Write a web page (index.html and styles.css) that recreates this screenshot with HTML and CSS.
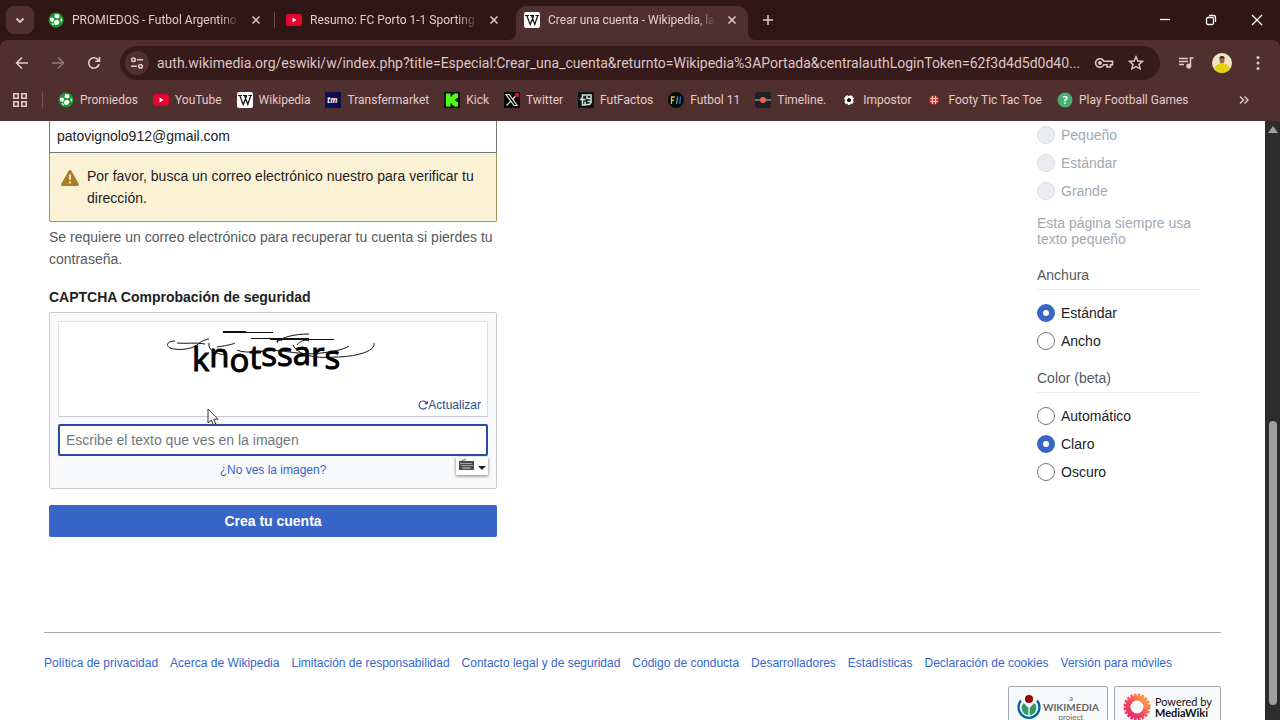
FILE: index.html
```html
<!DOCTYPE html>
<html lang="es">
<head>
    <meta charset="UTF-8">
    <title>Crear una cuenta - Wikipedia, la enciclopedia libre</title>
    <link rel="stylesheet" href="styles.css">
</head>
<body>
    <svg class="defs" width="0" height="0" aria-hidden="true">
        <symbol id="ball" viewBox="0 0 16 16">
            <circle cx="8" cy="8" r="7.5" fill="#18962c"/>
            <g fill="#fff">
                <path d="M7 2l4 .6.6 2.6-2.4 1.4L6.400 5.200z"/>
                <path d="M2 6l3-.6 1.400 2.400L4.600 10 2.200 9z"/>
                <path d="M6.800 8.400l3-.6 1.800 2.200-1.600 2.800-3 .2-1.400-2.400z"/>
                <path d="M12.800 6l1.600 1-.4 3-1.600-1.400z"/>
                <path d="M3.400 11l1.800.4 1 2.200-1.600-.6z"/>
            </g>
        </symbol>
        <symbol id="yt" viewBox="0 0 16 16">
            <rect y="2" width="16" height="12" rx="3" fill="#e8032f"/>
            <path d="M6.500 5.500v5l4-2.500z" fill="#fff"/>
        </symbol>
        <symbol id="wiki" viewBox="0 0 16 16">
            <rect width="16" height="16" rx="2" fill="#fff"/>
            <path d="M1 3.500h4M6 3.500h4M11.500 3.500H15M2.800 3.500l3.400 9 3.600-9M7.500 3.500l3.300 9 3-9" fill="none" stroke="#111" stroke-width="1.200"/>
        </symbol>
        <symbol id="x" viewBox="0 0 10 10">
            <path d="M1.500 1.500l7 7M8.500 1.500l-7 7" stroke="currentColor" stroke-width="1.500"/>
        </symbol>
    </svg>

    <header class="browser">
        <div class="tabstrip">
            <button class="tab-search" aria-label="Buscar pestañas"><svg width="12" height="12" viewBox="0 0 12 12"><path d="M2.500 4.500L6 8l3.500-3.500" fill="none" stroke="currentColor" stroke-width="1.800"/></svg></button>
            <div class="tab">
                <svg class="favicon"><use href="#ball"/></svg>
                <span class="tab-title">PROMIEDOS - Futbol Argentino</span>
                <button class="tab-close" aria-label="Cerrar"><svg width="10" height="10"><use href="#x"/></svg></button>
            </div>
            <div class="tab divided">
                <svg class="favicon"><use href="#yt"/></svg>
                <span class="tab-title">Resumo: FC Porto 1-1 Sporting</span>
                <button class="tab-close" aria-label="Cerrar"><svg width="10" height="10"><use href="#x"/></svg></button>
            </div>
            <div class="tab active">
                <svg class="favicon"><use href="#wiki"/></svg>
                <span class="tab-title">Crear una cuenta - Wikipedia, la</span>
                <button class="tab-close" aria-label="Cerrar"><svg width="10" height="10"><use href="#x"/></svg></button>
            </div>
            <button class="new-tab" aria-label="Nueva pestaña"><svg width="12" height="12" viewBox="0 0 12 12"><path d="M6 1v10M1 6h10" stroke="currentColor" stroke-width="1.500"/></svg></button>
            <div class="window-buttons">
                <button aria-label="Minimizar"><svg width="12" height="12" viewBox="0 0 12 12"><path d="M1 5.500h10" stroke="currentColor" stroke-width="1.300"/></svg></button>
                <button aria-label="Restaurar"><svg width="12" height="12" viewBox="0 0 12 12" fill="none" stroke="currentColor" stroke-width="1.300"><rect x="1.500" y="3.500" width="7" height="7" rx="1.500"/><path d="M4 1.500h4.500a2 2 0 0 1 2 2V8"/></svg></button>
                <button aria-label="Cerrar ventana"><svg width="12" height="12" viewBox="0 0 12 12"><path d="M1 1l10 10M11 1L1 11" stroke="currentColor" stroke-width="1.300"/></svg></button>
            </div>
        </div>

        <div class="toolbar">
            <button class="nav" aria-label="Atrás"><svg width="16" height="16" viewBox="0 0 16 16"><path d="M14 8H3M8 2.500L2.500 8 8 13.500" fill="none" stroke="currentColor" stroke-width="1.500"/></svg></button>
            <button class="nav off" aria-label="Adelante"><svg width="16" height="16" viewBox="0 0 16 16"><path d="M2 8h11M8 2.500L13.500 8 8 13.500" fill="none" stroke="currentColor" stroke-width="1.500"/></svg></button>
            <button class="nav" aria-label="Recargar"><svg width="16" height="16" viewBox="0 0 16 16"><path d="M13 9a5.200 5.200 0 1 1-1.300-4.600L13.500 6M13.500 2v4.200H9.300" fill="none" stroke="currentColor" stroke-width="1.600"/></svg></button>
            <div class="omnibox">
                <button class="site-info" aria-label="Información del sitio"><svg width="14" height="14" viewBox="0 0 14 14" fill="none" stroke="currentColor" stroke-width="1.500"><circle cx="3.500" cy="3.800" r="1.800"/><path d="M7 3.800h6M1 10.200h6"/><circle cx="10.500" cy="10.200" r="1.800"/></svg></button>
                <input class="url" type="text" aria-label="Dirección" value="auth.wikimedia.org/eswiki/w/index.php?title=Especial:Crear_una_cuenta&amp;returnto=Wikipedia%3APortada&amp;centralauthLoginToken=62f3d4d5d0d40...">
                <button class="nav" aria-label="Contraseñas"><svg width="20" height="16" viewBox="0 0 20 16" fill="none" stroke="currentColor" stroke-width="1.500"><path d="M9.800 6.300A4.300 4.300 0 1 0 9.800 9.700H13V12h3.500V9.700H18.500V6.300z"/><circle cx="6" cy="8" r="1.200" fill="currentColor"/></svg></button>
                <button class="nav" aria-label="Marcador"><svg width="16" height="16" viewBox="0 0 16 16"><path d="M8 1.800l1.900 4.200 4.600.4-3.500 3 1.100 4.500L8 11.500l-4.100 2.400L5 9.400l-3.500-3 4.600-.4z" fill="none" stroke="currentColor" stroke-width="1.400"/></svg></button>
            </div>
            <div class="toolbar-end">
                <button class="nav" aria-label="Controles multimedia"><svg width="16" height="16" viewBox="0 0 16 16" fill="none" stroke="currentColor" stroke-width="1.500"><path d="M1 3.500h9M1 6.500h9M1 9.500h5M12.500 11V3h3"/><circle cx="10.800" cy="11" r="1.800" fill="currentColor"/></svg></button>
                <button class="nav" aria-label="Perfil"><svg width="20" height="20" viewBox="0 0 20 20"><circle cx="10" cy="10" r="10" fill="#efe6c8"/><path d="M2 16c1-4 4-5.500 8-5.500s7 1.500 8 5.500a10 10 0 0 1-16 0z" fill="#dfd310"/><ellipse cx="10" cy="6.800" rx="2.600" ry="3.600" fill="#9b6a3d"/><path d="M7.400 5.500a2.600 2.600 0 0 1 5.200 0z" fill="#3d281d"/></svg></button>
                <button class="nav" aria-label="Menú"><svg width="16" height="16" viewBox="0 0 16 16" fill="currentColor"><circle cx="8" cy="2.500" r="1.500"/><circle cx="8" cy="8" r="1.500"/><circle cx="8" cy="13.500" r="1.500"/></svg></button>
            </div>
        </div>

        <nav class="bookmarks">
            <button class="apps" aria-label="Aplicaciones"><svg width="16" height="16" viewBox="0 0 16 16" fill="none" stroke="currentColor" stroke-width="1.600"><path d="M1.800 1.800h4.400v4.400H1.800zM9.800 1.800h4.400v4.400H9.800zM1.800 9.800h4.400v4.400H1.800zM9.800 9.800h4.400v4.400H9.800z"/></svg></button>
            <a href="#"><svg class="favicon"><use href="#ball"/></svg>Promiedos</a>
            <a href="#"><svg class="favicon"><use href="#yt"/></svg>YouTube</a>
            <a href="#"><svg class="favicon"><use href="#wiki"/></svg>Wikipedia</a>
            <a href="#"><svg class="favicon" viewBox="0 0 16 16"><rect width="16" height="16" fill="#0b1152"/><text x="2" y="11" class="tm">tm</text></svg>Transfermarket</a>
            <a href="#"><svg class="favicon" viewBox="0 0 16 16"><rect width="16" height="16" fill="#0a140a"/><path d="M2 1.500h4.500v3H8V3h1.500V1.500H14v4.500h-1.500v1.300H11v1.400h1.500V10H14v4.500H9.500V13H8v-1.500H6.500v3H2z" fill="#4ffb1a"/></svg>Kick</a>
            <a href="#"><svg class="favicon" viewBox="0 0 16 16"><rect width="16" height="16" fill="#050505"/><path d="M2 2.500h3.200l8 11H10zM13 2.500l-4.600 5M7 9l-4.500 4.500" fill="none" stroke="#e6e6e6" stroke-width="1.200"/><circle cx="13" cy="3" r="2.200" fill="#d8123c"/></svg>Twitter</a>
            <a href="#"><svg class="favicon" viewBox="0 0 16 16"><rect width="16" height="16" fill="#0d1512"/><path d="M8 3H4.500v2.500L3 7.500h4.500M4.500 7.500V13H7V9.500M7.500 12.500H11.500l1.500-2V3H9v3.500h4M9.500 9.500H13" fill="none" stroke="#d5e3dc" stroke-width="1.500"/></svg>FutFactos</a>
            <a href="#"><svg class="favicon" viewBox="0 0 16 16"><circle cx="8" cy="8" r="8" fill="#06090f"/><path d="M3.500 12V5h3.300M3.500 8.300h2.700" fill="none" stroke="#e0c52c" stroke-width="1.300"/><path d="M9.500 4.500l-.8 7.500" stroke="#28b8c4" stroke-width="1.300"/><path d="M12.500 4.500l-.8 7.500" stroke="#2a75d8" stroke-width="1.300"/></svg>Futbol 11</a>
            <a href="#"><svg class="favicon" viewBox="0 0 16 16"><rect width="16" height="16" rx="3" fill="#1c2127"/><path d="M0 8h16" stroke="#aaa" stroke-width="1.200"/><circle cx="8" cy="8" r="3" fill="#f4604c"/></svg>Timeline.</a>
            <a href="#"><svg class="favicon" viewBox="0 0 16 16"><circle cx="8" cy="8" r="5" fill="#fff"/><path d="M8 5.800l2.200 1.600-.8 2.600H6.600l-.8-2.600zM6.500 3h3l-1.500 1zM3 7l1.300 1-.8 2zM13 7l-1.300 1 .8 2zM5.500 12.500l.3-1.300 1.400 1.500zM10.500 12.500l-.3-1.300-1.400 1.500z" fill="#15100f"/></svg>Impostor</a>
            <a href="#"><svg class="favicon" viewBox="0 0 16 16"><circle cx="8" cy="8" r="4.800" fill="#c52b32"/><path d="M6.500 4v8M9.500 4v8M4 6.500h8M4 9.500h8" stroke="#ffc79a" stroke-width="1.200"/></svg>Footy Tic Tac Toe</a>
            <a href="#"><svg class="favicon" viewBox="0 0 16 16"><circle cx="8" cy="8" r="7.500" fill="#4cae73"/><text x="8" y="12" class="help">?</text></svg>Play Football Games</a>
            <button class="more" aria-label="Más marcadores"><svg width="12" height="12" viewBox="0 0 12 12"><path d="M2 2.500L5.500 6 2 9.500M6.500 2.500L10 6l-3.500 3.500" fill="none" stroke="currentColor" stroke-width="1.400"/></svg></button>
        </nav>
    </header>

    <div class="viewport">
        <div class="page">
            <main class="content">
                <form class="signup">
                    <input class="email" type="email" aria-label="Correo electrónico" value="patovignolo912@gmail.com">
                    <div class="warning">
                        <svg width="18" height="18" viewBox="0 0 20 20"><path d="M11.500 1.900a1.700 1.700 0 0 0-3 0L.3 16.400A1.700 1.700 0 0 0 1.800 19h16.400a1.700 1.700 0 0 0 1.500-2.600z" fill="#ab7f2a"/><path d="M9 6h2v6H9zM9 14h2v2H9z" fill="#fdf2d5"/></svg>
                        <p>Por favor, busca un correo electrónico nuestro para verificar tu dirección.</p>
                    </div>
                    <p class="help-text">Se requiere un correo electrónico para recuperar tu cuenta si pierdes tu contraseña.</p>

                    <label class="captcha-label" for="captcha">CAPTCHA Comprobación de seguridad</label>
                    <div class="captcha">
                        <div class="captcha-image">
                            <svg width="216" height="56" viewBox="0 0 216 56" role="img">
                                <text class="captcha-word" x="27" y="43">k<tspan dy="-4">n</tspan><tspan dy="5">o</tspan><tspan dy="-3">t</tspan><tspan dy="-3">s</tspan><tspan>s</tspan><tspan dy="-1">a</tspan><tspan dy="1">r</tspan><tspan dy="3">s</tspan></text>
                                <g fill="none" stroke="#111" stroke-width="1">
                                    <path d="M58 4.500h50" />
                                    <path d="M58 4h23" stroke-width="2"/>
                                    <path d="M10 13C3 13 0 17 5 20c9 3 22 1 27-3 4-4 7-5 12-6"/>
                                    <path d="M12 15c8 1 18-1 28 1"/>
                                    <path d="M44 15c-1 7 5 11 18 12M52 19c6-1 14-2 18-4"/>
                                    <path d="M86 10.500h58M105 11.500h64M112 14c5-5 18-8 32-8M113 15c-3-3 1-4 4-2"/>
                                    <path d="M72 22c10 5 30-1 45 1 16 2 27 4 39 2 10-1 22-3 28-7"/>
                                    <path d="M128 17c4 9 20 14 42 12 18 0 41-5 39-14"/>
                                    <path d="M132 17c3-4 8-6 12-4"/>
                                </g>
                            </svg>
                            <button class="refresh" type="button"><svg width="10" height="10" viewBox="0 0 10 10"><path d="M8.500 7A4 4 0 1 1 8 2.300L9 3.500M9.300 1v2.800H6.500" fill="none" stroke="currentColor" stroke-width="1.100"/></svg>Actualizar</button>
                        </div>
                        <div class="captcha-entry">
                            <input id="captcha" type="text" placeholder="Escribe el texto que ves en la imagen">
                            <button class="keyboard" type="button" aria-label="Teclado"><svg width="28" height="14" viewBox="0 0 28 14"><path d="M4 3c0-2 3 0 4-2" fill="none" stroke="#555" /><rect x="1" y="3" width="15" height="9" fill="#4a4a4a"/><path d="M2.500 5.500h12M3.500 7.500h11" stroke="#fff" stroke-dasharray="1 1"/><path d="M4.500 10h8" stroke="#ddd"/><path d="M20 8h8l-4 4z" fill="#222"/></svg></button>
                        </div>
                        <a class="captcha-help" href="#">¿No ves la imagen?</a>
                    </div>
                    <button class="submit" type="submit">Crea tu cuenta</button>
                </form>

                <aside class="appearance">
                    <div class="options">
                        <label><input type="radio" name="text" disabled>Pequeño</label>
                        <label><input type="radio" name="text" disabled>Estándar</label>
                        <label><input type="radio" name="text" disabled>Grande</label>
                    </div>
                    <p class="note">Esta página siempre usa texto pequeño</p>
                    <h2>Anchura</h2>
                    <div class="options">
                        <label><input type="radio" name="width" checked>Estándar</label>
                        <label><input type="radio" name="width">Ancho</label>
                    </div>
                    <h2>Color (beta)</h2>
                    <div class="options">
                        <label><input type="radio" name="color">Automático</label>
                        <label><input type="radio" name="color" checked>Claro</label>
                        <label><input type="radio" name="color">Oscuro</label>
                    </div>
                </aside>
            </main>

            <footer class="footer">
                <nav class="footer-links">
                    <a href="#">Política de privacidad</a>
                    <a href="#">Acerca de Wikipedia</a>
                    <a href="#">Limitación de responsabilidad</a>
                    <a href="#">Contacto legal y de seguridad</a>
                    <a href="#">Código de conducta</a>
                    <a href="#">Desarrolladores</a>
                    <a href="#">Estadísticas</a>
                    <a href="#">Declaración de cookies</a>
                    <a href="#">Versión para móviles</a>
                </nav>
                <div class="badges">
                    <a class="badge wikimedia" href="#">
                        <svg width="24" height="26" viewBox="0 0 24 26"><circle cx="12" cy="5" r="4" fill="#900"/><path d="M4 6.500a10.500 10.500 0 1 0 16 0" fill="none" stroke="#069" stroke-width="2.200"/><path d="M6.800 9a7 7 0 0 0 4.600 12V14z" fill="#396"/><path d="M17.200 9a7 7 0 0 1-4.600 12V14z" fill="#396"/></svg>
                        <span><small>a</small><b>WIKIMEDIA</b><small>project</small></span>
                    </a>
                    <a class="badge mediawiki" href="#">
                        <svg width="28" height="28" viewBox="0 0 28 28" fill="none">
                            <defs><linearGradient id="sun" x1="0" y1="1" x2="1" y2="0"><stop offset="0" stop-color="#e5246e"/><stop offset=".5" stop-color="#f4505c"/><stop offset="1" stop-color="#fbb040"/></linearGradient></defs>
                            <circle cx="14" cy="14" r="9" stroke="url(#sun)" stroke-width="5"/>
                            <circle cx="14" cy="14" r="12" stroke="url(#sun)" stroke-width="3" stroke-dasharray="2.600 1.200"/>
                        </svg>
                        <span>Powered by<b>MediaWiki</b></span>
                    </a>
                </div>
            </footer>
            <svg class="cursor" width="12" height="18" viewBox="0 0 12 18"><path d="M1 1v14l3.300-3 2.200 5 2.300-1-2.100-4.800h4.300z" fill="#fff" stroke="#333" stroke-width="1"/></svg>
        </div>
        <div class="scrollbar"><i class="arrow"></i><i class="thumb"></i></div>
    </div>
</body>
</html>
```
FILE: styles.css
```css
* {
    box-sizing: border-box;
}
body {
    margin: 0;
    height: 100vh;
    display: flex;
    flex-direction: column;
    overflow: hidden;
    font: 14px/22px "Liberation Sans", Arial, sans-serif;
    color: #202122;
    background: #fff;
}
button, input {
    font: inherit;
    margin: 0;
}
button {
    padding: 0;
    border: 0;
    background: none;
    color: inherit;
}
a {
    text-decoration: none;
}
p, h2 {
    margin: 0;
}
svg {
    flex: none;
}
.defs {
    position: absolute;
}

/* browser window */
.browser {
    flex: none;
    background: #311616;
    color: #e4cbc9;
    font-family: Roboto, "Noto Sans", sans-serif;
}
.browser button {
    display: flex;
    align-items: center;
    justify-content: center;
}
.favicon {
    width: 16px;
    height: 16px;
}
.tabstrip {
    display: flex;
    align-items: center;
    height: 40px;
    padding-left: 6px;
    font-size: 12px;
}
.browser .tab-search {
    width: 28px;
    height: 28px;
    margin-right: 6px;
    border-radius: 8px;
    background: #4f302f;
}
.tab {
    position: relative;
    display: flex;
    align-items: center;
    gap: 8px;
    width: 232px;
    height: 34px;
    margin: 6px 6px 0 0;
    padding: 0 8px 6px;
    align-self: flex-end;
}
.tab.divided::before {
    content: "";
    position: absolute;
    left: -4px;
    top: 6px;
    width: 1px;
    height: 16px;
    background: #6b4a49;
}
.tab.active {
    background: #4f302f;
    border-radius: 10px 10px 0 0;
}
.tab.active::before, .tab.active::after {
    content: "";
    position: absolute;
    bottom: 0;
    width: 8px;
    height: 8px;
}
.tab.active::before {
    right: 100%;
    background: radial-gradient(circle at 0 0, transparent 8px, #4f302f 8px);
}
.tab.active::after {
    left: 100%;
    background: radial-gradient(circle at 100% 0, transparent 8px, #4f302f 8px);
}
.tab-title {
    flex: 1;
    white-space: nowrap;
    overflow: hidden;
    mask-image: linear-gradient(to left, transparent, #000 20px);
}
.tab-close {
    width: 16px;
    height: 16px;
}
.browser .new-tab {
    width: 28px;
    height: 28px;
}
.window-buttons {
    display: flex;
    margin-left: auto;
    color: #fff;
}
.window-buttons button {
    width: 46px;
    height: 40px;
}
.toolbar {
    display: flex;
    align-items: center;
    height: 46px;
    padding: 0 8px;
    gap: 8px;
    border-radius: 8px 8px 0 0;
    background: #4f302f;
}
.nav {
    width: 28px;
    height: 28px;
}
.nav.off {
    color: #95797a;
}
.omnibox {
    display: flex;
    align-items: center;
    flex: 1;
    gap: 4px;
    height: 34px;
    margin-left: 4px;
    padding: 0 10px 0 5px;
    border-radius: 17px;
    background: #371b1b;
}
.browser .site-info {
    width: 24px;
    height: 24px;
    border-radius: 50%;
    background: #4f302f;
}
.url {
    flex: 1;
    min-width: 0;
    padding: 0 4px;
    border: 0;
    background: none;
    color: #dcc6c5;
    font-size: 14px;
    outline: 0;
}
.toolbar-end {
    display: flex;
    gap: 8px;
    margin-left: 4px;
}
.bookmarks {
    display: flex;
    align-items: center;
    gap: 15px;
    height: 35px;
    padding: 0 30px 7px 12px;
    background: #4f302f;
    font-size: 12px;
    white-space: nowrap;
}
.bookmarks a {
    display: flex;
    align-items: center;
    gap: 6px;
    color: #e4cbc9;
}
.browser .apps {
    padding-right: 14px;
    border-right: 1px solid #775655;
}
.more {
    margin-left: auto;
}
.tm {
    font: italic bold 8px "Open Sans", sans-serif;
    fill: #fff;
}
.help {
    font: bold 11px "Open Sans", sans-serif;
    fill: #fff;
    text-anchor: middle;
}

/* page */
.viewport {
    flex: 1;
    min-height: 0;
    display: flex;
}
.page {
    position: relative;
    flex: 1;
    padding: 0 44px;
    overflow: hidden;
}
.content {
    display: flex;
    justify-content: space-between;
    padding: 0 21px 0 5px;
}
.signup {
    display: flex;
    flex-direction: column;
    width: 448px;
}
.email {
    height: 32px;
    padding: 0 7px 2px;
    border: 1px solid #72777d;
    border-top: 0;
    background: #fff;
    color: #202122;
    outline: 0;
}
.warning {
    display: flex;
    gap: 8px;
    padding: 12px 11px;
    border: 1px solid #a3955b;
    border-top: 0;
    border-radius: 0 0 2px 2px;
    background: #fbf2d5;
}
.warning svg {
    margin-top: 4px;
}
.help-text {
    margin-top: 4px;
    color: #54595d;
}
.captcha-label {
    margin: 16px 0 4px;
    font-weight: bold;
}
.captcha {
    display: flex;
    flex-direction: column;
    padding: 8px 8px 7px;
    border: 1px solid #c8ccd1;
    border-radius: 2px;
    background: #f8f9fa;
}
.captcha-image {
    display: flex;
    flex-direction: column;
    align-items: center;
    padding: 6px 6px 0;
    border: 1px solid #dcdfe3;
    border-bottom-color: #c8ccd1;
    background: #fff;
}
.captcha-word {
    font: 33px "Open Sans", sans-serif;
    fill: #000;
    stroke: #000;
}
.refresh {
    display: flex;
    align-items: center;
    align-self: flex-end;
    margin-top: 10px;
    color: #2a4b8d;
    font-size: 12px;
}
.captcha-entry {
    position: relative;
    margin-top: 7px;
}
#captcha {
    display: block;
    width: 100%;
    height: 32px;
    padding: 0 6px;
    border: 2px solid #2a4b9d;
    border-radius: 2px;
    background: #fff;
    outline: 0;
}
#captcha::placeholder {
    color: #72777d;
}
.keyboard {
    position: absolute;
    top: 33px;
    right: 0;
    display: flex;
    padding: 1px 2px 3px;
    background: #fff;
    box-shadow: 0 1px 3px #777;
}
.captcha-help {
    align-self: center;
    margin-top: 3px;
    color: #36c;
    font-size: 12px;
}
.submit {
    height: 32px;
    margin-top: 16px;
    padding-bottom: 1px;
    border-radius: 2px;
    background: #3866c8;
    color: #fff;
    font-weight: bold;
}
.appearance {
    width: 163px;
}
.options label {
    display: flex;
    align-items: center;
    gap: 6px;
    height: 28px;
}
.options input {
    appearance: none;
    width: 18px;
    height: 18px;
    border: 1px solid #72777d;
    border-radius: 50%;
    background: #fff;
}
.options input:checked {
    border: 6px solid #3866c8;
}
.options input:disabled {
    border-color: #dadde3;
    background: #eaecf0;
}
.options label:has(:disabled), .note {
    color: #a2a9b1;
}
.note {
    margin: 10px 0 13px;
    line-height: 16px;
}
.appearance h2 {
    margin-bottom: 9px;
    padding: 4px 0 3px;
    border-bottom: 1px solid #eaecf0;
    color: #54595d;
    font-size: 14px;
    font-weight: normal;
}
.options + h2 {
    margin-top: 8px;
}
.footer {
    margin-top: 95px;
    padding-top: 19px;
    border-top: 1px solid #a2a9b1;
    font-size: 12px;
}
.footer-links {
    display: flex;
    gap: 12px;
    white-space: nowrap;
}
.footer-links a {
    color: #36c;
}
.badges {
    display: flex;
    justify-content: flex-end;
    gap: 6px;
    margin-top: 12px;
}
.badge {
    display: flex;
    align-items: center;
    gap: 4px;
    height: 42px;
    padding: 0 8px;
    border: 1px solid #a2a9b1;
    border-radius: 2px;
    background: #f8f9fa;
    color: #111;
    font: 11px/11px Lato, sans-serif;
}
.badge b {
    display: block;
}
.wikimedia {
    gap: 2px;
}
.wikimedia span {
    color: #666;
    font-size: 10px;
    text-align: center;
}
.wikimedia small {
    display: block;
    font-size: 8px;
    line-height: 8px;
}
.cursor {
    position: absolute;
    top: 287px;
    left: 207px;
}
.scrollbar {
    display: flex;
    flex-direction: column;
    align-items: center;
    width: 15px;
    padding: 5px 0 15px;
    background: #2c2c2c;
}
.arrow {
    border: 5px solid transparent;
    border-top: 0;
    border-bottom: 7px solid #9f9f9f;
}
.thumb {
    width: 8px;
    height: 49%;
    margin-top: auto;
    border-radius: 4px;
    background: #9f9f9f;
}
```
